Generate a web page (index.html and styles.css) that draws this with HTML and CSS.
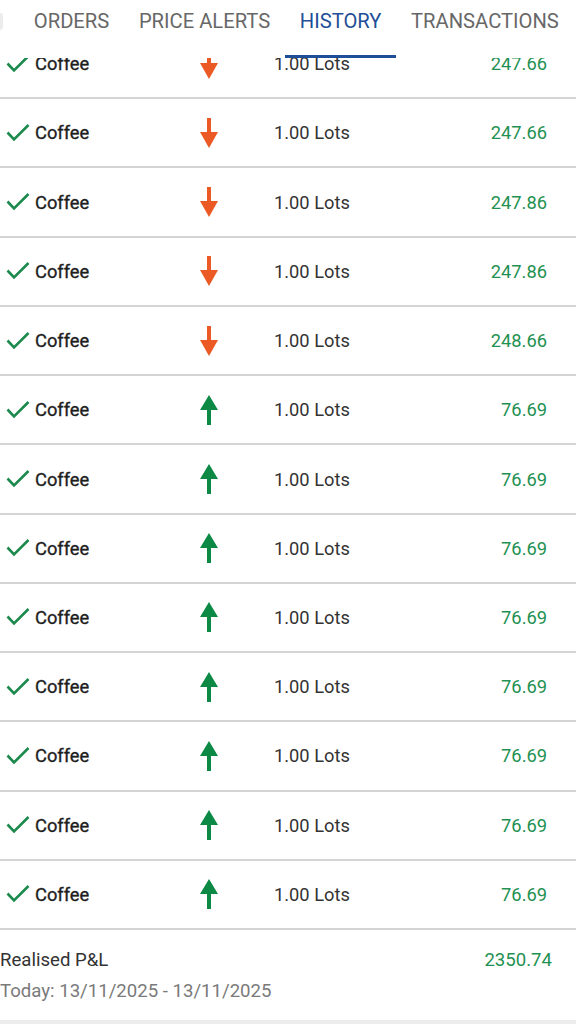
FILE: index.html
```html
<!DOCTYPE html>
<html>
<head>
    <title>History</title>
    <link rel="stylesheet" href="styles.css">
</head>
<body>
    <div class="tabs">
        <span class="tab-edge"></span>
        <div class="tab">ORDERS</div>
        <div class="tab">PRICE ALERTS</div>
        <div class="tab active">HISTORY</div>
        <div class="tab">TRANSACTIONS</div>
    </div>

    <ul class="history">
        <li class="row">
            <svg class="check" viewBox="0 0 24 18"><path d="M1.5 8.5L8 15.5L22.5 1"/></svg>
            <span class="name">Coffee</span>
            <svg class="arrow down" viewBox="0 0 18 30"><path d="M7 0h4v14h7l-9 16-9-16h7z"/></svg>
            <span class="lots">1.00 Lots</span>
            <span class="price">247.66</span>
        </li>
        <li class="row">
            <svg class="check" viewBox="0 0 24 18"><path d="M1.5 8.5L8 15.5L22.5 1"/></svg>
            <span class="name">Coffee</span>
            <svg class="arrow down" viewBox="0 0 18 30"><path d="M7 0h4v14h7l-9 16-9-16h7z"/></svg>
            <span class="lots">1.00 Lots</span>
            <span class="price">247.66</span>
        </li>
        <li class="row">
            <svg class="check" viewBox="0 0 24 18"><path d="M1.5 8.5L8 15.5L22.5 1"/></svg>
            <span class="name">Coffee</span>
            <svg class="arrow down" viewBox="0 0 18 30"><path d="M7 0h4v14h7l-9 16-9-16h7z"/></svg>
            <span class="lots">1.00 Lots</span>
            <span class="price">247.86</span>
        </li>
        <li class="row">
            <svg class="check" viewBox="0 0 24 18"><path d="M1.5 8.5L8 15.5L22.5 1"/></svg>
            <span class="name">Coffee</span>
            <svg class="arrow down" viewBox="0 0 18 30"><path d="M7 0h4v14h7l-9 16-9-16h7z"/></svg>
            <span class="lots">1.00 Lots</span>
            <span class="price">247.86</span>
        </li>
        <li class="row">
            <svg class="check" viewBox="0 0 24 18"><path d="M1.5 8.5L8 15.5L22.5 1"/></svg>
            <span class="name">Coffee</span>
            <svg class="arrow down" viewBox="0 0 18 30"><path d="M7 0h4v14h7l-9 16-9-16h7z"/></svg>
            <span class="lots">1.00 Lots</span>
            <span class="price">248.66</span>
        </li>
        <li class="row">
            <svg class="check" viewBox="0 0 24 18"><path d="M1.5 8.5L8 15.5L22.5 1"/></svg>
            <span class="name">Coffee</span>
            <svg class="arrow up" viewBox="0 0 18 30"><path d="M9 0l9 15h-7v15H7V15H0z"/></svg>
            <span class="lots">1.00 Lots</span>
            <span class="price">76.69</span>
        </li>
        <li class="row">
            <svg class="check" viewBox="0 0 24 18"><path d="M1.5 8.5L8 15.5L22.5 1"/></svg>
            <span class="name">Coffee</span>
            <svg class="arrow up" viewBox="0 0 18 30"><path d="M9 0l9 15h-7v15H7V15H0z"/></svg>
            <span class="lots">1.00 Lots</span>
            <span class="price">76.69</span>
        </li>
        <li class="row">
            <svg class="check" viewBox="0 0 24 18"><path d="M1.5 8.5L8 15.5L22.5 1"/></svg>
            <span class="name">Coffee</span>
            <svg class="arrow up" viewBox="0 0 18 30"><path d="M9 0l9 15h-7v15H7V15H0z"/></svg>
            <span class="lots">1.00 Lots</span>
            <span class="price">76.69</span>
        </li>
        <li class="row">
            <svg class="check" viewBox="0 0 24 18"><path d="M1.5 8.5L8 15.5L22.5 1"/></svg>
            <span class="name">Coffee</span>
            <svg class="arrow up" viewBox="0 0 18 30"><path d="M9 0l9 15h-7v15H7V15H0z"/></svg>
            <span class="lots">1.00 Lots</span>
            <span class="price">76.69</span>
        </li>
        <li class="row">
            <svg class="check" viewBox="0 0 24 18"><path d="M1.5 8.5L8 15.5L22.5 1"/></svg>
            <span class="name">Coffee</span>
            <svg class="arrow up" viewBox="0 0 18 30"><path d="M9 0l9 15h-7v15H7V15H0z"/></svg>
            <span class="lots">1.00 Lots</span>
            <span class="price">76.69</span>
        </li>
        <li class="row">
            <svg class="check" viewBox="0 0 24 18"><path d="M1.5 8.5L8 15.5L22.5 1"/></svg>
            <span class="name">Coffee</span>
            <svg class="arrow up" viewBox="0 0 18 30"><path d="M9 0l9 15h-7v15H7V15H0z"/></svg>
            <span class="lots">1.00 Lots</span>
            <span class="price">76.69</span>
        </li>
        <li class="row">
            <svg class="check" viewBox="0 0 24 18"><path d="M1.5 8.5L8 15.5L22.5 1"/></svg>
            <span class="name">Coffee</span>
            <svg class="arrow up" viewBox="0 0 18 30"><path d="M9 0l9 15h-7v15H7V15H0z"/></svg>
            <span class="lots">1.00 Lots</span>
            <span class="price">76.69</span>
        </li>
        <li class="row">
            <svg class="check" viewBox="0 0 24 18"><path d="M1.5 8.5L8 15.5L22.5 1"/></svg>
            <span class="name">Coffee</span>
            <svg class="arrow up" viewBox="0 0 18 30"><path d="M9 0l9 15h-7v15H7V15H0z"/></svg>
            <span class="lots">1.00 Lots</span>
            <span class="price">76.69</span>
        </li>
    </ul>

    <div class="summary">
        <div class="summary-line">
            <span class="summary-label">Realised P&amp;L</span>
            <span class="summary-value">2350.74</span>
        </div>
        <div class="summary-date">Today: 13/11/2025 - 13/11/2025</div>
    </div>
</body>
</html>
```

FILE: styles.css
```css
body {
    font-family: Roboto, "Liberation Sans", sans-serif;
    background-color: #fff;
    margin: 0;
    padding: 0;
    height: 1024px;
    overflow: hidden;
}

/* tab bar sits on top of the scrolled list */
.tabs {
    position: relative;
    z-index: 1;
    display: flex;
    align-items: flex-start;
    height: 58px;
    background-color: #fff;
}

.tab-edge {
    width: 3px;
    height: 17px;
    margin: 13px 16px 0 0;
    background-color: #ececec;
    border-radius: 0 3px 3px 0;
}

.tab {
    position: relative;
    height: 58px;
    padding: 0 14.8px;
    line-height: 43px;
    font-size: 20.2px;
    color: #676767;
    white-space: nowrap;
}

.tab.active {
    color: #1f4f96;
}

.tab.active::after {
    content: "";
    position: absolute;
    left: 0;
    right: 0;
    bottom: 0;
    height: 3px;
    background-color: #1d4e97;
}

.history {
    list-style: none;
    margin: -28px 0 0 0;
    padding: 0;
}

.row {
    display: grid;
    grid-template-columns: 29px 165px 18px 1fr auto;
    align-items: center;
    box-sizing: border-box;
    height: 69.24px;
    padding: 0 29px 0 6px;
    border-bottom: 2px solid #d4d4d4;
    font-size: 18.3px;
}

.check {
    width: 24px;
    height: 18px;
    fill: none;
    stroke: #1c8a4d;
    stroke-width: 2.6;
}

.name {
    color: #1e1e1e;
    -webkit-text-stroke: 0.35px #1e1e1e;
}

.arrow {
    width: 18px;
    height: 30px;
}

.arrow.down {
    fill: #eb5a25;
}

.arrow.up {
    fill: #0c8944;
}

.lots {
    padding-left: 56px;
    color: #333;
}

.price {
    color: #1f9152;
}

.summary {
    padding: 15px 24px 13px 0;
    border-bottom: 4px solid #ededed;
    font-size: 18.6px;
    line-height: 31px;
}

.summary-line {
    display: flex;
    justify-content: space-between;
}

.summary-label {
    color: #333;
}

.summary-value {
    color: #1f9152;
}

.summary-date {
    color: #7a7a7a;
}
```
